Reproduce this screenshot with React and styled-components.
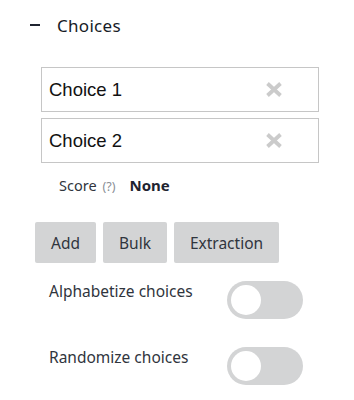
import React, { useState } from "react";
import styled, { createGlobalStyle } from "styled-components";

const GlobalStyle = createGlobalStyle`
    body {
        margin: 0;
        background: #ffffff;
        font-family: "Noto Sans", "Open Sans", sans-serif;
        color: #1f2430;
    }
`;

const StyledPanel = styled.div`
    display: flex;
    flex-direction: column;
    padding: 12px 35px 0 30px;
    width: 354px;
    box-sizing: border-box;
`;

const StyledHeader = styled.div`
    display: flex;
    align-items: center;
    gap: 17px;
    height: 26px;
    font-size: 17px;
    letter-spacing: 0.3px;
    color: #161b26;
`;

const StyledMinus = styled.span`
    display: block;
    width: 10px;
    height: 2px;
    background: #1f2430;
`;

const StyledList = styled.div`
    display: flex;
    flex-direction: column;
    gap: 6px;
    margin: 29px 0 0 11px;
`;

const StyledChoice = styled.div`
    display: flex;
    align-items: center;
    justify-content: space-between;
    height: 45px;
    box-sizing: border-box;
    border: 1px solid #c6c6c6;
    padding: 0 35px 0 7px;
    font-family: "Liberation Sans", Arial, sans-serif;
    font-size: 18.5px;
    color: #111111;
`;

const StyledRemove = styled.svg`
    width: 18px;
    height: 15px;
    display: block;
`;

const StyledScore = styled.div`
    display: flex;
    align-items: baseline;
    margin: 12px 0 0 29px;
    font-size: 14.5px;
    color: #30353d;
`;

const StyledHint = styled.span`
    font-size: 12.5px;
    color: #8a8f96;
    margin: 0 14px 0 6px;
`;

const StyledValue = styled.span`
    font-weight: 700;
    font-size: 15px;
    color: #1f2430;
`;

const StyledButtons = styled.div`
    display: flex;
    gap: 7px;
    margin: 27px 0 0 5px;
`;

const StyledButton = styled.button`
    height: 41px;
    padding: 0 16px;
    border: none;
    border-radius: 2px;
    background: #d3d4d5;
    font-family: "Noto Sans", "Open Sans", sans-serif;
    font-size: 15.5px;
    color: #30353d;
    cursor: pointer;
`;

const StyledOption = styled.div`
    display: flex;
    justify-content: space-between;
    align-items: flex-start;
    margin: ${(p) => p.$top}px 0 0 19px;
    padding-right: 16px;
    font-size: 15.5px;
    color: #30353d;
`;

const StyledToggle = styled.button`
    position: relative;
    width: 76px;
    height: 38px;
    border: none;
    border-radius: 19px;
    background: #d3d4d5;
    margin-top: 1px;
    cursor: pointer;
    padding: 0;

    &::after {
        content: "";
        position: absolute;
        top: 4px;
        left: ${(p) => (p.$on ? 42 : 4)}px;
        width: 30px;
        height: 30px;
        border-radius: 50%;
        background: #ffffff;
    }
`;

const RemoveIcon = () => (
    <StyledRemove viewBox="0 0 18 15">
        <path
            d="M2.5 1.5 L15.5 13.5 M15.5 1.5 L2.5 13.5"
            stroke="#cbcbcb"
            strokeWidth="3.8"
        />
    </StyledRemove>
);

const App = () => {
    const [alpha, setAlpha] = useState(false);
    const [random, setRandom] = useState(false);

    return (
        <>
            <GlobalStyle />
            <StyledPanel>
                <StyledHeader>
                    <StyledMinus />
                    Choices
                </StyledHeader>
                <StyledList>
                    <StyledChoice>
                        Choice 1
                        <RemoveIcon />
                    </StyledChoice>
                    <StyledChoice>
                        Choice 2
                        <RemoveIcon />
                    </StyledChoice>
                </StyledList>
                <StyledScore>
                    Score
                    <StyledHint>(?)</StyledHint>
                    <StyledValue>None</StyledValue>
                </StyledScore>
                <StyledButtons>
                    <StyledButton>Add</StyledButton>
                    <StyledButton>Bulk</StyledButton>
                    <StyledButton>Extraction</StyledButton>
                </StyledButtons>
                <StyledOption $top={17}>
                    Alphabetize choices
                    <StyledToggle
                        $on={alpha}
                        onClick={() => setAlpha(!alpha)}
                    />
                </StyledOption>
                <StyledOption $top={27}>
                    Randomize choices
                    <StyledToggle
                        $on={random}
                        onClick={() => setRandom(!random)}
                    />
                </StyledOption>
            </StyledPanel>
        </>
    );
};

export default App;
